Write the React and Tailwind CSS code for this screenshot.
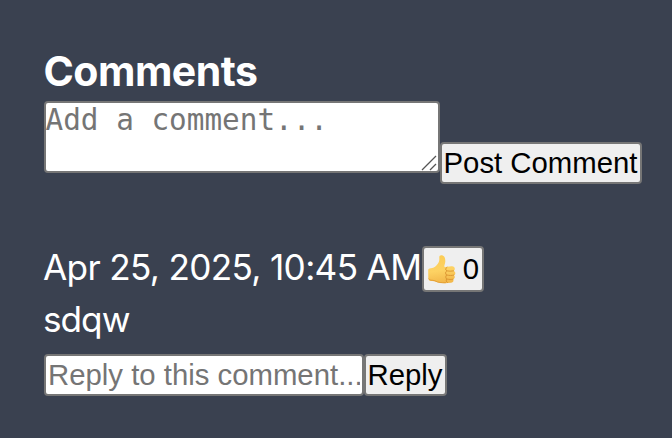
function ThumbsUp() {
  return (
    <svg className="block h-[30px] w-[29px] shrink-0" viewBox="0 0 29 30" role="img" aria-label="Like">
      <defs>
        <linearGradient id="skin" x1="0" y1="0" x2="0.15" y2="1">
          <stop offset="0" stopColor="#fbcb52" />
          <stop offset="0.6" stopColor="#fdd263" />
          <stop offset="1" stopColor="#f3b94c" />
        </linearGradient>
      </defs>
      <path
        d="M1.2 17.2C1 15 1.7 14.3 4 14.2C7.3 14.1 9.2 12.2 11 9.5C12.5 7.2 12.4 5.5 12.3 3.4C12.2 1.6 13.3 1 14.8 1.2C17.5 1.6 18.5 4.3 18.3 7.4C18.2 9.2 17.5 10.5 17.3 12C17.2 12.8 17.6 13 18.3 12.9L24.5 12.3C26.5 12.1 27.8 13.1 27.8 14.7C27.8 15.8 27.3 16.5 26.6 16.9C28.9 17.6 28.9 20.6 26.9 21.2C28.4 22.2 28 24.8 26.1 25.2C27.1 26.6 26.2 28.4 24.2 28.7C20.5 29.2 15.5 29.4 12.2 28.7C9.5 28.1 7.8 26.8 4.5 27C2.3 27.1 1.4 26.1 1.3 23.8Z"
        fill="url(#skin)"
      />
      <g fill="none" stroke="#d9922f" strokeWidth="0.9" strokeLinecap="round">
        <path d="M19.8 16.9C22 17.3 24.5 17.3 26.6 16.9" />
        <path d="M19.7 21C22.2 21.6 24.8 21.6 26.8 21.1" />
        <path d="M19.8 25C22 25.6 24.2 25.6 26.1 25.2" />
        <path d="M20 13.2C18.4 13.9 18.2 16 19.8 16.9C18.2 17.8 18.2 20.1 19.7 21C18.4 21.9 18.5 24.3 19.8 25C18.8 26 19.1 27.8 20.4 28.5" />
      </g>
      <path d="M1.7 24.5C2.5 27 5.2 25.8 7.8 26.7C11 28.8 14.5 28.8 19 28.7" fill="none" stroke="#df982f" strokeWidth="0.8" />
    </svg>
  );
}

const control = "border-2 border-[#767676] rounded-[4px] font-['Liberation_Sans',Arial,sans-serif] text-[29.33px]";
const button = control + " flex items-center justify-center bg-[#efefef] leading-none text-black whitespace-nowrap";

export default function App() {
  return (
    <main className="h-[438px] w-[672px] overflow-hidden bg-[#3a4150] pt-[46px] pl-[44px] font-['Inter',sans-serif] text-white">
      <h2 className="-ml-[0.5px] h-[55px] text-[41px] leading-[51px] font-bold tracking-[-0.5px]">Comments</h2>
      <form className="flex h-[83px] items-start">
        <div className="relative h-[72px] w-[396px]">
          <textarea
            className="block h-full w-full resize-none rounded-[4px] border-2 border-[#767676] bg-white p-0 indent-[-0.5px] font-['DejaVu_Sans_Mono',monospace] text-[29.33px] leading-[34px] text-black placeholder:text-[#757575]"
            placeholder="Add a comment..."
          />
          <svg className="absolute right-[3px] bottom-[2px] h-4 w-4" viewBox="0 0 16 16" fill="none" stroke="#555" strokeWidth="1.3">
            <path d="M1 15L15 1M9 15L15 9" />
          </svg>
        </div>
        <button type="button" className={button + " mt-[41px] h-[42px] w-[202px] pr-px"}>Post Comment</button>
      </form>
      <article className="mt-[62px]">
        <div className="flex h-[46px]">
          <span className="-ml-px w-[379px] text-[35.2px] leading-[42px] tracking-[-0.68px] whitespace-nowrap">Apr 25, 2025, 10:45 AM</span>
          <button type="button" className={button + " h-[46px] w-[62px] gap-[7px]"}>
            <ThumbsUp />
            <span>0</span>
          </button>
        </div>
        <p className="-ml-px h-[62px] text-[35.2px] leading-[55px] tracking-[-1px]">sdqw</p>
        <form className="flex">
          <input
            className={control + " h-[42px] w-[320px] bg-white px-[2px] py-0 text-black placeholder:text-[#757575]"}
            placeholder="Reply to this comment..."
          />
          <button type="button" className={button + " h-[42px] w-[83px] pr-px"}>Reply</button>
        </form>
      </article>
    </main>
  );
}
